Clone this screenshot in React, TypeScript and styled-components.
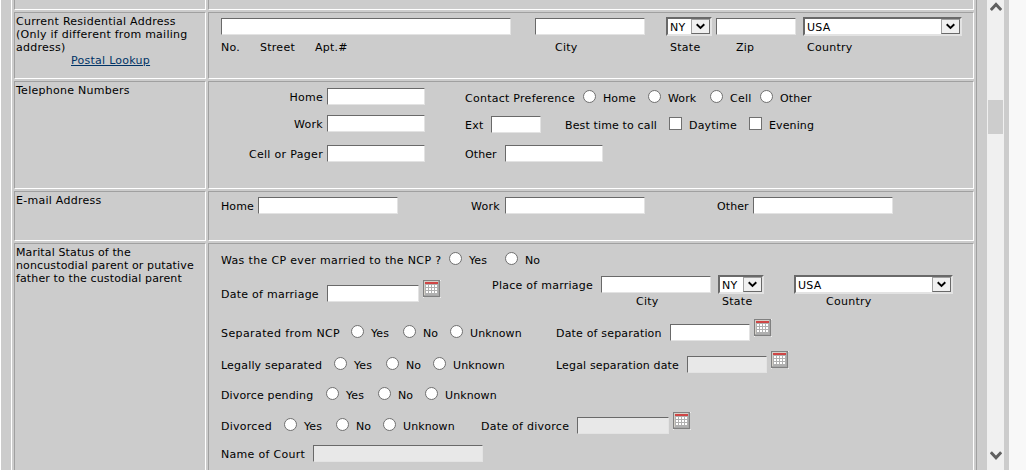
import React from "react";
import styled, { createGlobalStyle } from "styled-components";

const Global = createGlobalStyle`
  body { margin: 0; background: #f8f8f8; overflow: hidden; }
  * { box-sizing: border-box; }
`;

const Page = styled.div`
  display: flex;
  width: 1026px;
  height: 470px;
  overflow: hidden;
  background: #f8f8f8;
  color: #000;
  font: 11px/13px "DejaVu Sans", Verdana, sans-serif;
`;

const Frame = styled.div`
  display: flex;
  width: 1009px;
  background: #ccc;
  border-left: 1px solid #fff;
`;

const Panel = styled.div`
  display: flex;
  flex-direction: column;
  gap: 2px;
  width: 966px;
  height: 470px;
  overflow: hidden;
  margin-left: 10px;
  padding: 0 2px;
  border-left: 1px solid #fff;
  border-right: 1px solid #a0a0a0;
`;

const Row = styled.div<{ $h: number }>`
  display: grid;
  grid-template-columns: 192px 766px;
  gap: 2px;
  flex: none;
  height: ${(p) => p.$h}px;
`;

const Cell = styled.div<{ $open?: boolean; $sp?: number }>`
  border: 1px solid;
  border-color: #a0a0a0 #fff #fff #a0a0a0;
  border-top-width: ${(p) => (p.$open ? 0 : 1)}px;
  padding: 2px 1px 0;
  letter-spacing: ${(p) => p.$sp ?? 0.26}px;
`;

const Fields = styled(Cell)`
  padding: 1px 0 0 12px;
`;

const Line = styled.div<{ $cols: string; $h: number }>`
  display: grid;
  grid-template-columns: ${(p) => p.$cols};
  align-items: start;
  height: ${(p) => p.$h}px;
`;

const Text = styled.span<{ $top?: number; $sp?: number; $right?: boolean }>`
  margin-top: ${(p) => p.$top ?? 0}px;
  letter-spacing: ${(p) => p.$sp ?? 0.26}px;
  text-align: ${(p) => (p.$right ? "right" : "left")};
  padding-right: ${(p) => (p.$right ? 4 : 0)}px;
  white-space: nowrap;
`;

const Link = styled.a`
  display: block;
  padding-left: 55px;
  color: #003366;
  text-decoration: underline;
`;

const Input = styled.input<{ $w: number; $top?: number }>`
  width: ${(p) => p.$w}px;
  height: 17px;
  margin: ${(p) => (p.$top ?? 0) - 1}px 0 0;
  padding: 0 2px;
  border: 1px solid;
  border-color: #696969 #e3e3e3 #e3e3e3 #696969;
  border-radius: 0;
  background: #fff;
  &:disabled { background: #e8e8e8; }
`;

const Mark = styled.input<{ $top?: number }>`
  appearance: none;
  width: 13px;
  height: 13px;
  margin: ${(p) => (p.$top ?? 0) - 1}px 0 0;
  background: #fff;
  border: 1px solid #707070;
  border-radius: ${(p) => (p.type === "radio" ? "50%" : "0")};
`;

const SelectBox = styled.div<{ $w: number; $top?: number }>`
  display: flex;
  justify-content: space-between;
  width: ${(p) => p.$w}px;
  height: 19px;
  margin-top: ${(p) => (p.$top ?? 0) - 1}px;
  padding-left: 2px;
  background: #fff;
  border: 2px solid;
  border-color: #696969 #e3e3e3 #e3e3e3 #696969;
  line-height: 17px;
`;

const Arrow = styled.span`
  display: flex;
  align-items: center;
  justify-content: center;
  width: 19px;
  height: 15px;
  background: #f0f0f0;
  border: 1px solid;
  border-color: #a0a0a0 #696969 #696969 #a0a0a0;
`;

const Calendar = styled.svg<{ $top?: number }>`
  display: block;
  width: 18px;
  height: 18px;
  margin-top: ${(p) => (p.$top ?? 0) - 1}px;
`;

const Scrollbar = styled.div`
  display: flex;
  flex-direction: column;
  align-items: center;
  width: 17px;
  height: 470px;
  margin-left: 10px;
  background: #f0f0f0;
`;

const Thumb = styled.div`
  width: 15px;
  height: 34px;
  margin: 86px 0 314px;
  background: #cdcdcd;
`;

const Select = ({ w, top, children }: { w: number; top?: number; children: string }) => (
  <SelectBox $w={w} $top={top}>
    <span>{children}</span>
    <Arrow>
      <svg width="9" height="7" viewBox="0 0 9 7">
        <path d="M0.7 1.3 L4.5 4.9 L8.3 1.3" fill="none" stroke="#000" strokeWidth="1.9" />
      </svg>
    </Arrow>
  </SelectBox>
);

const CalendarIcon = ({ top }: { top: number }) => (
  <Calendar $top={top} viewBox="0 0 18 18" shapeRendering="crispEdges">
    <rect width="17" height="17" fill="#808080" />
    <rect x="1" y="1" width="15" height="15" fill="#d4d0c8" />
    <rect x="15" y="1" width="1" height="15" fill="#a8a8a8" />
    <rect x="1" y="15" width="15" height="1" fill="#a8a8a8" />
    <rect x="2" y="2" width="13" height="2" fill="#cf4545" />
    <rect x="2" y="4" width="13" height="11" fill="#b0b0b0" />
    {[3, 6, 9, 12].map((x) =>
      [5, 8, 11].map((y) => <rect key={`${x}-${y}`} x={x} y={y} width="2" height="2" fill="#fff" />)
    )}
    <path d="M0 17h1v1h-1z M17 0h1v1h-1z M17 17h1v1h-1z" fill="#eee" />
  </Calendar>
);

const YesNo = ({ name, top, unknown = true }: { name: string; top: number; unknown?: boolean }) => (
  <>
    <Mark type="radio" name={name} $top={top - 1} />
    <Text $top={top} $sp={0.1}>Yes</Text>
    <Mark type="radio" name={name} $top={top - 1} />
    <Text $top={top} $sp={0.1}>No</Text>
    {unknown && (
      <>
        <Mark type="radio" name={name} $top={top - 1} />
        <Text $top={top} $sp={0.1}>Unknown</Text>
      </>
    )}
  </>
);

export default function App() {
  return (
    <>
      <Global />
      <Page>
        <Frame>
          <Panel>
            <Row $h={10}>
              <Cell $open />
              <Cell $open />
            </Row>

            <Row $h={67}>
              <Cell>
                Current Residential Address
                <br />
                (Only if different from mailing
                <br />
                address)
                <Link href="#">Postal Lookup</Link>
              </Cell>
              <Fields>
                <Line $h={27} $cols="314px 131px 50px 87px 159px">
                  <Input $w={290} $top={5} />
                  <Input $w={110} $top={5} />
                  <Select w={46} top={4}>NY</Select>
                  <Input $w={80} $top={5} />
                  <Select w={159} top={4}>USA</Select>
                </Line>
                <Line $h={13} $cols="39px 55px 240px 115px 66px 71px 80px">
                  <Text>No.</Text>
                  <Text>Street</Text>
                  <Text>Apt.#</Text>
                  <Text>City</Text>
                  <Text>State</Text>
                  <Text>Zip</Text>
                  <Text>Country</Text>
                </Line>
              </Fields>
            </Row>

            <Row $h={108}>
              <Cell>Telephone Numbers</Cell>
              <Fields>
                <Line $h={30} $cols="106px 138px 118px 20px 45px 20px 42px 20px 30px 20px 40px">
                  <Text $top={8} $right>Home</Text>
                  <Input $w={98} $top={6} />
                  <Text $top={9}>Contact Preference</Text>
                  <Mark type="radio" name="pref" $top={8} />
                  <Text $top={9} $sp={0.1}>Home</Text>
                  <Mark type="radio" name="pref" $top={8} />
                  <Text $top={9} $sp={0.1}>Work</Text>
                  <Mark type="radio" name="pref" $top={8} />
                  <Text $top={9}>Cell</Text>
                  <Mark type="radio" name="pref" $top={8} />
                  <Text $top={9} $sp={0.1}>Other</Text>
                </Line>
                <Line $h={30} $cols="106px 138px 26px 74px 104px 20px 60px 20px 60px">
                  <Text $top={5} $right>Work</Text>
                  <Input $w={98} $top={3} />
                  <Text $top={6}>Ext</Text>
                  <Input $w={50} $top={4} />
                  <Text $top={6} $sp={0.14}>Best time to call</Text>
                  <Mark type="checkbox" $top={5} />
                  <Text $top={6} $sp={0.2}>Daytime</Text>
                  <Mark type="checkbox" $top={5} />
                  <Text $top={6} $sp={0.12}>Evening</Text>
                </Line>
                <Line $h={30} $cols="106px 138px 40px 98px">
                  <Text $top={5} $sp={0.32} $right>Cell or Pager</Text>
                  <Input $w={98} $top={3} />
                  <Text $top={5} $sp={0.1}>Other</Text>
                  <Input $w={98} $top={3} />
                </Line>
              </Fields>
            </Row>

            <Row $h={50}>
              <Cell>E-mail Address</Cell>
              <Fields>
                <Line $h={40} $cols="37px 213px 34px 212px 36px 140px">
                  <Text $top={7} $sp={0.1}>Home</Text>
                  <Input $w={140} $top={5} />
                  <Text $top={7}>Work</Text>
                  <Input $w={140} $top={5} />
                  <Text $top={7} $sp={0.1}>Other</Text>
                  <Input $w={140} $top={5} />
                </Line>
              </Fields>
            </Row>

            <Row $h={300}>
              <Cell $sp={0.13}>
                Marital Status of the
                <br />
                noncustodial parent or putative
                <br />
                father to the custodial parent
              </Cell>
              <Fields>
                <Line $h={30} $cols="228px 20px 36px 20px 40px">
                  <Text $top={9} $sp={0.34}>Was the CP ever married to the NCP ?</Text>
                  <YesNo name="married" top={9} unknown={false} />
                </Line>
                <Line $h={20} $cols="106px 96px 69px 109px 117px 76px 159px">
                  <Text $top={13}>Date of marriage</Text>
                  <Input $w={92} $top={11} />
                  <CalendarIcon top={6} />
                  <Text $top={4}>Place of marriage</Text>
                  <Input $w={110} $top={2} />
                  <Select w={46} top={1}>NY</Select>
                  <Select w={159} top={1}>USA</Select>
                </Line>
                <Line $h={25} $cols="415px 86px 104px 60px">
                  <span />
                  <Text>City</Text>
                  <Text>State</Text>
                  <Text>Country</Text>
                </Line>
                <Line $h={32} $cols="130px 20px 32px 20px 27px 20px 86px 114px 84px 18px">
                  <Text $top={7} $sp={0.4}>Separated from NCP</Text>
                  <YesNo name="separated" top={7} />
                  <Text $top={7} $sp={0.18}>Date of separation</Text>
                  <Input $w={80} $top={5} />
                  <CalendarIcon top={0} />
                </Line>
                <Line $h={30} $cols="113px 20px 32px 20px 27px 20px 103px 131px 84px 18px">
                  <Text $top={7} $sp={0.18}>Legally separated</Text>
                  <YesNo name="legal" top={7} />
                  <Text $top={7} $sp={0.15}>Legal separation date</Text>
                  <Input $w={80} $top={5} disabled />
                  <CalendarIcon top={0} />
                </Line>
                <Line $h={31} $cols="105px 20px 32px 20px 27px 20px 80px">
                  <Text $top={7} $sp={0.15}>Divorce pending</Text>
                  <YesNo name="pending" top={7} />
                </Line>
                <Line $h={28} $cols="63px 20px 32px 20px 27px 20px 78px 96px 96px 18px">
                  <Text $top={7}>Divorced</Text>
                  <YesNo name="divorced" top={7} />
                  <Text $top={7}>Date of divorce</Text>
                  <Input $w={92} $top={5} disabled />
                  <CalendarIcon top={0} />
                </Line>
                <Line $h={26} $cols="92px 170px">
                  <Text $top={7} $sp={0.3}>Name of Court</Text>
                  <Input $w={170} $top={5} disabled />
                </Line>
              </Fields>
            </Row>
          </Panel>
          <Scrollbar>
            <svg width="12" height="14" viewBox="0 0 12 14">
              <path d="M0.8 10 L6 4.4 L11.2 10" fill="none" stroke="#606060" strokeWidth="3" />
            </svg>
            <Thumb />
            <svg width="12" height="14" viewBox="0 0 12 14">
              <path d="M0.8 4.2 L6 9.8 L11.2 4.2" fill="none" stroke="#606060" strokeWidth="3" />
            </svg>
          </Scrollbar>
        </Frame>
      </Page>
    </>
  );
}
